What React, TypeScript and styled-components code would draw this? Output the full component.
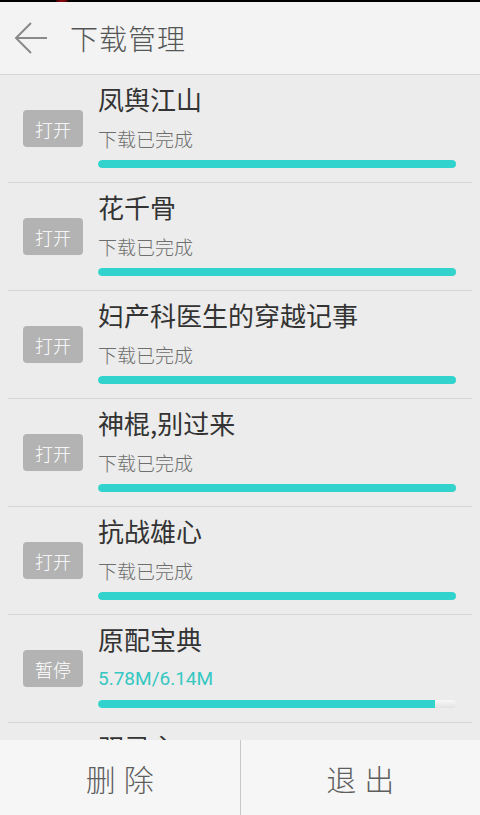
import React from "react";
import styled, { createGlobalStyle } from "styled-components";

const Global = createGlobalStyle`
  html, body { margin: 0; padding: 0; height: 100%; }
  body { background: #ebeceb; font-family: "Noto Sans CJK SC", "Noto Sans", Roboto, sans-serif; }
  #root { height: 100%; }
`;

const Screen = styled.div`
  width: 480px;
  height: 815px;
  display: flex;
  flex-direction: column;
  overflow: hidden;
  background: #ebeceb;
`;

const StatusStrip = styled.div`
  height: 2px;
  background: #000;
  position: relative;
  flex: none;
  &::after {
    content: "";
    position: absolute;
    left: 56px;
    top: 0;
    width: 12px;
    height: 2px;
    background: radial-gradient(ellipse at center, #c0101a 0%, rgba(150, 0, 10, 0.6) 60%, transparent 100%);
  }
`;

const Header = styled.div`
  height: 72px;
  flex: none;
  display: flex;
  align-items: center;
  background: #f2f3f2;
  border-bottom: 1px solid #d6d7d6;
  padding-left: 14px;
  gap: 22px;
`;

const Title = styled.div`
  font-size: 28px;
  font-weight: 300;
  color: #555656;
  letter-spacing: 1px;
  line-height: 1;
`;

const List = styled.div`
  flex: 1;
  overflow: hidden;
  padding: 0 8px;
`;

const Row = styled.div`
  height: 107px;
  border-bottom: 1px solid #d4d5d4;
  display: flex;
  align-items: center;
  padding: 0 16px 0 15px;
  gap: 15px;
`;

const ActionButton = styled.div`
  width: 60px;
  height: 37px;
  flex: none;
  border-radius: 4px;
  background: #b3b3b3;
  color: #fff;
  font-size: 18px;
  font-weight: 300;
  display: flex;
  align-items: center;
  justify-content: center;
`;

const Info = styled.div`
  flex: 1;
  display: flex;
  flex-direction: column;
  align-self: flex-start;
  padding-top: 9px;
`;

const Name = styled.div`
  font-size: 26px;
  font-weight: 400;
  line-height: 30px;
  color: #333;
`;

const Status = styled.div<{ $active?: boolean }>`
  margin-top: 13px;
  font-size: 19px;
  font-weight: ${(p) => (p.$active ? 400 : 300)};
  line-height: 24px;
  color: ${(p) => (p.$active ? "#35c7c2" : "#6e6e6e")};
  font-family: ${(p) => (p.$active ? 'Roboto, "Noto Sans", sans-serif' : '"Noto Sans CJK SC", sans-serif')};
`;

const Track = styled.div`
  margin-top: 9px;
  height: 8px;
  border-radius: 4px;
  background: linear-gradient(#f8f8f8, #e2e2e2);
  overflow: hidden;
`;

const Fill = styled.div`
  height: 100%;
  background: #33d3cd;
  border-radius: 4px 0 0 4px;
`;

const PartialRow = styled.div`
  padding: 9px 0 0 90px;
`;

const BottomBar = styled.div`
  height: 75px;
  flex: none;
  display: flex;
  background: #f6f6f6;
`;

const BottomButton = styled.div<{ $divider?: boolean }>`
  flex: 1;
  display: flex;
  align-items: center;
  justify-content: center;
  font-size: 30px;
  font-weight: 300;
  color: #5e5e5e;
  letter-spacing: 8px;
  text-indent: 8px;
  border-left: ${(p) => (p.$divider ? "1px solid #c8c8c8" : "none")};
`;

const items = [
  { name: "凤舆江山", done: true, pct: 1 },
  { name: "花千骨", done: true, pct: 1 },
  { name: "妇产科医生的穿越记事", done: true, pct: 1 },
  { name: "神棍,别过来", done: true, pct: 1 },
  { name: "抗战雄心", done: true, pct: 1 },
  { name: "原配宝典", done: false, pct: 5.78 / 6.14, size: "5.78M/6.14M" },
];

const BackIcon = () => (
  <svg width="34" height="32" viewBox="0 0 34 32">
    <path d="M17 1 L2 16 L17 31 M2 16 H33" stroke="#8a8a8a" strokeWidth="2" fill="none" />
  </svg>
);

export default function App() {
  return (
    <Screen>
      <Global />
      <StatusStrip />
      <Header>
        <BackIcon />
        <Title>下载管理</Title>
      </Header>
      <List>
        {items.map((it) => (
          <Row key={it.name}>
            <ActionButton>{it.done ? "打开" : "暂停"}</ActionButton>
            <Info>
              <Name>{it.name}</Name>
              <Status $active={!it.done}>{it.done ? "下载已完成" : it.size}</Status>
              <Track>
                <Fill style={{ width: `${it.pct * 100}%` }} />
              </Track>
            </Info>
          </Row>
        ))}
        <PartialRow>
          <Name>驭灵主</Name>
        </PartialRow>
      </List>
      <BottomBar>
        <BottomButton>删除</BottomButton>
        <BottomButton $divider>退出</BottomButton>
      </BottomBar>
    </Screen>
  );
}
